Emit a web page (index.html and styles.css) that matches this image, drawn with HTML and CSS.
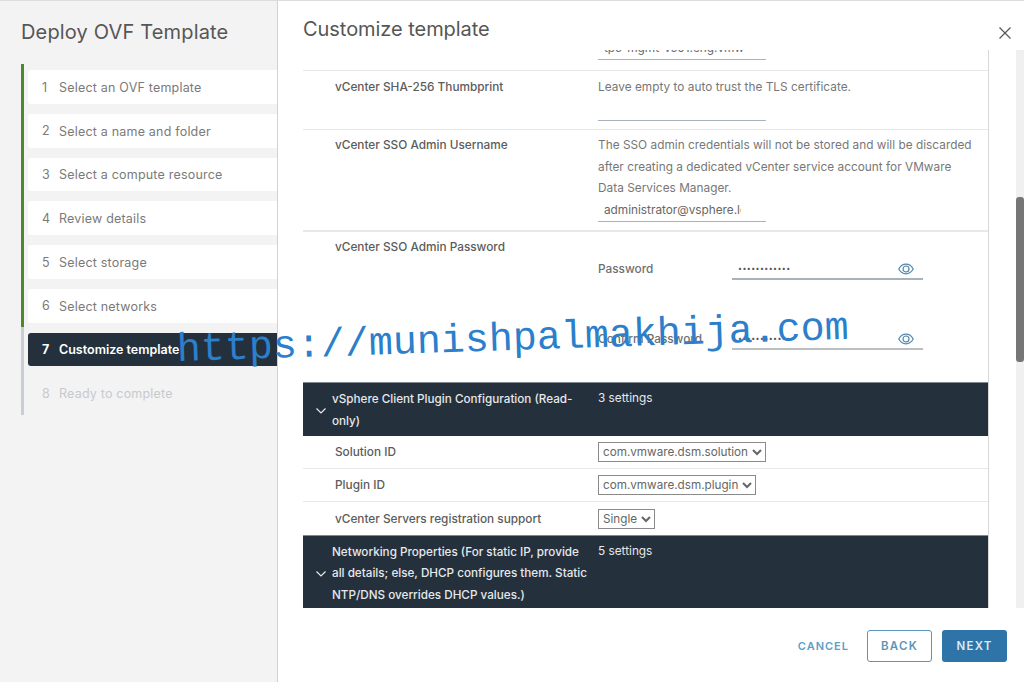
FILE: index.html
```html
<!DOCTYPE html>
<html lang="en">
<head>
<meta charset="utf-8">
<title>Deploy OVF Template</title>
<link rel="stylesheet" href="styles.css">
</head>
<body>
<div class="wizard">
  <aside class="side">
    <h1 class="side-title">Deploy OVF Template</h1>
    <ol class="steps">
      <li class="step done"><span class="num">1</span><span class="step-box">Select an OVF template</span></li>
      <li class="step done"><span class="num">2</span><span class="step-box">Select a name and folder</span></li>
      <li class="step done"><span class="num">3</span><span class="step-box">Select a compute resource</span></li>
      <li class="step done"><span class="num">4</span><span class="step-box">Review details</span></li>
      <li class="step done"><span class="num">5</span><span class="step-box">Select storage</span></li>
      <li class="step done"><span class="num">6</span><span class="step-box">Select networks</span></li>
      <li class="step active"><span class="num">7</span><span class="step-box">Customize template</span></li>
      <li class="step todo"><span class="num">8</span><span class="step-box">Ready to complete</span></li>
    </ol>
  </aside>
  <main class="main">
    <header class="head">
      <h2 class="main-title">Customize template</h2>
      <svg class="close" viewBox="0 0 12 12" width="12" height="12"><path d="M.5.5l11 11M11.5.5l-11 11" fill="none" stroke="#565656" stroke-width="1.2"/></svg>
    </header>
    <div class="body">
      <div class="panel">
        <div class="row row-clip">
          <div class="field clipped">tpc-mgmt-vc01.eng.vmw</div>
        </div>
        <div class="row row-thumb">
          <div class="label">vCenter SHA-256 Thumbprint</div>
          <div class="value">
            <p class="desc">Leave empty to auto trust the TLS certificate.</p>
            <div class="field empty"></div>
          </div>
        </div>
        <div class="row row-user">
          <div class="label">vCenter SSO Admin Username</div>
          <div class="value">
            <p class="desc">The SSO admin credentials will not be stored and will be discarded after creating a dedicated vCenter service account for VMware Data Services Manager.</p>
            <div class="field"><span class="clip-text">administrator@vsphere.local</span></div>
          </div>
        </div>
        <div class="row row-pass">
          <div class="label">vCenter SSO Admin Password</div>
          <div class="value pass-grid">
            <div class="pass-row">
              <span class="pass-label">Password</span>
              <div class="pass-field"><span class="dots">••••••••••••</span>
                <svg class="eye" viewBox="0 0 16 12" width="16" height="12"><path d="M.8 6C2.5 2.8 5 1.2 8 1.2S13.500 2.800 15.200 6C13.500 9.200 11 10.800 8 10.800S2.500 9.200.8 6z" fill="none" stroke="#4f86ad" stroke-width="1.200"/><circle cx="8" cy="6" r="3" fill="none" stroke="#4f86ad" stroke-width="1.200"/></svg>
              </div>
            </div>
            <div class="pass-row">
              <span class="pass-label">Confirm Password</span>
              <div class="pass-field pass-second"><span class="dots">••••••••••••</span>
                <svg class="eye" viewBox="0 0 16 12" width="16" height="12"><path d="M.8 6C2.5 2.8 5 1.2 8 1.2S13.500 2.800 15.200 6C13.500 9.200 11 10.800 8 10.800S2.500 9.200.8 6z" fill="none" stroke="#4f86ad" stroke-width="1.200"/><circle cx="8" cy="6" r="3" fill="none" stroke="#4f86ad" stroke-width="1.200"/></svg>
              </div>
            </div>
          </div>
        </div>
        <div class="group group-a">
          <svg class="chev" viewBox="0 0 10 6" width="10" height="6"><path d="M.5.5L5 5 9.500.5" fill="none" stroke="#e6e9ec" stroke-width="1.200"/></svg>
          <div class="group-name">vSphere Client Plugin Configuration (Read-<br>only)</div>
          <div class="group-count">3 settings</div>
        </div>
        <div class="row row-sel">
          <div class="label">Solution ID</div>
          <select class="sel"><option>com.vmware.dsm.solution</option></select>
        </div>
        <div class="row row-sel">
          <div class="label">Plugin ID</div>
          <select class="sel"><option>com.vmware.dsm.plugin</option></select>
        </div>
        <div class="row row-sel row-last">
          <div class="label">vCenter Servers registration support</div>
          <select class="sel"><option>Single</option></select>
        </div>
        <div class="group group-b">
          <svg class="chev" viewBox="0 0 10 6" width="10" height="6"><path d="M.5.5L5 5 9.500.5" fill="none" stroke="#e6e9ec" stroke-width="1.200"/></svg>
          <div class="group-name">Networking Properties (For static IP, provide<br>all details; else, DHCP configures them. Static<br>NTP/DNS overrides DHCP values.)</div>
          <div class="group-count">5 settings</div>
        </div>
      </div>
      <div class="scroll"><div class="thumb"></div></div>
    </div>
    <footer class="foot">
      <span class="btn-link">CANCEL</span>
      <span class="btn btn-back">BACK</span>
      <span class="btn btn-next">NEXT</span>
    </footer>
  </main>
</div>
<div class="topline"></div>
<div class="mark">https://munishpalmakhija.com</div>
</body>
</html>
```
FILE: styles.css
```css
* { box-sizing: border-box; }
html, body { margin: 0; height: 682px; overflow: hidden; background: #fff; }
body { font-family: Inter, "Noto Sans", sans-serif; font-size: 11.800px; color: #666; position: relative; }
.wizard { display: flex; height: 682px; }
.topline { position: absolute; left: 0; top: 0; width: 100%; height: 1px; background: #dcdcdc; }

.side { width: 278px; flex: none; background: #f3f3f3; border-right: 1px solid #cfd3d8; padding: 21px 0 0 21px; }
.side-title { margin: 0 0 20px; font-size: 20px; line-height: 23px; font-weight: 400; color: #565656; letter-spacing: 0.160px; }
.steps { list-style: none; margin: 0; padding: 0; }
.step { height: 43.750px; padding: 6px 0 4px 4px; display: flex; position: relative; border-left: 3px solid #4d8a2c; font-size: 12.500px; letter-spacing: 0.200px; color: #7a7a7a; }
.step.active { border-left-color: #c9ced4; }
.step.todo { border-left-color: #c9ced4; height: 45px; }
.step-box { flex: 1; display: flex; align-items: center; padding: 1px 0 0 31px; background: #fff; border-radius: 3px 0 0 3px; }
.step.todo .step-box { flex: none; width: calc(100% - 0px); height: 34px; }
.num { position: absolute; left: 18px; top: 6.500px; height: 34px; line-height: 34px; z-index: 1; }
.step.active .step-box { background: #25303d; color: #fff; font-weight: 600; letter-spacing: 0; }
.step.active .num { color: #fff; font-weight: 700; }
.step.todo .step-box { background: transparent; color: #c6cad0; }
.step.todo .num { color: #c6cad0; }

.main { flex: 1; display: flex; flex-direction: column; min-width: 0; }
.head { height: 50px; display: flex; justify-content: space-between; align-items: center; padding: 8px 13px 0 25px; }
.main-title { margin: 0; font-size: 20px; font-weight: 400; color: #565656; letter-spacing: -0.050px; }
.close { margin-top: 8px; }
.body { height: 558px; display: flex; padding-left: 25px; }
.panel { width: 686px; height: 558px; overflow: hidden; border-right: 1px solid #d7d7d7; }
.scroll { margin-left: 27px; width: 8px; background: #f0f0f0; }
.thumb { margin-top: 147px; height: 165px; background: #767676; border-radius: 3px; }

.row { display: flex; border-bottom: 1px solid #e8e8e8; padding-left: 32px; }
.label { width: 263px; flex: none; font-weight: 500; color: #5c5c5c; }
.value { width: 380px; }
.desc { margin: 0; line-height: 21.500px; color: #777; letter-spacing: 0.030px; }
.field { width: 168px; border-bottom: 1px solid #a9b2ba; height: 22px; line-height: 21px; padding-left: 6px; overflow: hidden; color: #666; }
.clip-text { display: block; width: 137px; overflow: hidden; white-space: nowrap; }
.row-clip { height: 21px; padding-left: 295px; align-items: flex-end; overflow: hidden; padding-bottom: 10px; }
.clipped { flex: none; height: 22px; }
.row-thumb { height: 59px; padding-top: 6px; }
.row-thumb .label { padding-top: 3px; }
.row-thumb .field { height: 22px; margin-top: 0; }
.row-user { height: 102px; padding-top: 5px; border-bottom-width: 2px; }
.row-user .label { padding-top: 3px; }
.row-pass { height: 150px; padding-top: 8px; border-bottom: 0; }
.pass-grid { display: flex; flex-direction: column; gap: 49px; padding-top: 19px; }
.pass-row { display: flex; align-items: flex-end; height: 21px; }
.pass-label { width: 134px; flex: none; font-weight: 500; color: #6f6f6f; padding-bottom: 4px; }
.pass-field { width: 191px; height: 21px; border-bottom: 2px solid #a9b2ba; display: flex; justify-content: space-between; align-items: center; padding: 0 9px 0 6px; }
.pass-second { border-bottom-color: #bcbfc2; }
.dots { font-size: 7px; letter-spacing: 0.450px; color: #555; }

.group { background: #25303d; color: #e6e9ec; display: flex; align-items: center; padding-left: 13px; border-top: 1px solid #7d8893; }
.group-name { width: 260px; margin-left: 6px; flex: none; font-weight: 500; line-height: 21.500px; font-size: 11.700px; white-space: nowrap; }
.group-count { margin-left: 6px; align-self: flex-start; line-height: 21.500px; }
.group-a { height: 54px; padding-top: 2px; }
.group-a .group-count { margin-top: 3px; }
.group-b { height: 73px; padding-top: 4px; }
.group-b .group-count { margin-top: 1px; }

.row-sel { height: 33px; align-items: center; }
.row-last { border-bottom: 0; }
.sel { font: inherit; color: #666; height: 20px; background: #fff; border: 1px solid #8a8a8a; padding: 0; margin: 0; font-size: 11.700px; }

.foot { flex: 1; display: flex; justify-content: flex-end; align-items: center; gap: 18px; padding: 2px 17px 0 0; font-size: 11.500px; font-weight: 600; letter-spacing: 1.200px; }
.btn-link { color: #5f9ec6; font-size: 11px; letter-spacing: 1px; }
.btn { width: 65px; height: 32px; display: flex; align-items: center; justify-content: center; border-radius: 3px; }
.btn-back { color: #5d95b8; border: 1px solid #5d95b8; background: #fff; }
.btn-next { color: #dce9f2; background: #2f74a8; margin-left: -8px; }

.mark { position: absolute; left: 177px; top: 328px; font-family: "Liberation Mono", monospace; font-size: 40px; line-height: 46px; color: #2b7fcb; white-space: nowrap; transform: rotate(-1.900deg); transform-origin: left center; }
```
